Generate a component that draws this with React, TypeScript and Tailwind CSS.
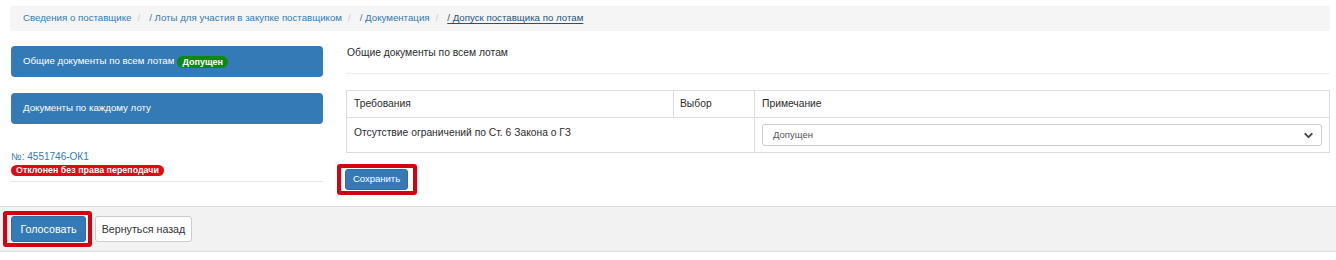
import React from 'react';
import { ChevronDown } from 'lucide-react';

const crumbs = [
  'Сведения о поставщике',
  '/ Лоты для участия в закупке поставщиком',
  '/ Документация',
];

export default function App() {
  return (
    <div className="w-[1336px] h-[260px] bg-white text-[10.3px] text-[#2b2b2b] font-['Liberation_Sans',Arial,sans-serif]">
      {/* Breadcrumb */}
      <div className="pt-[6px] px-[10px] mr-[-4px]">
        <div className="h-[25px] bg-[#f5f5f5] rounded-[3px] flex items-center pl-[13px] text-[9.7px]">
          {crumbs.map((c) => (
            <React.Fragment key={c}>
              <span className="text-[#337ab7]">{c}</span>
              <span className="text-[#ccc] pl-[6px] pr-[9px]">/</span>
            </React.Fragment>
          ))}
          <span className="text-[#23527c] underline underline-offset-2">/ Допуск поставщика по лотам</span>
        </div>
      </div>

      <div className="flex pl-[11px] pr-[6px] pt-[15px]">
        {/* Left column */}
        <div className="w-[312px] flex flex-col text-[9.7px]">
          <div className="h-[31px] bg-[#337ab7] rounded-[4px] flex items-center pl-[12px] text-white">
            Общие документы по всем лотам
            <span className="ml-[3px] bg-[#0b8a12] rounded-full px-[5px] h-[12px] leading-[12px] text-[9px] font-bold">Допущен</span>
          </div>
          <div className="h-[31px] mt-[16px] bg-[#337ab7] rounded-[4px] flex items-center pl-[12px] text-white">
            Документы по каждому лоту
          </div>
          <div className="mt-[27px] text-[#337ab7] text-[10px] leading-[12px]">№: 4551746-ОК1</div>
          <div className="mt-[2px] self-start bg-[#e30613] text-white rounded-full px-[5px] h-[11px] leading-[11px] text-[8.9px] font-bold">
            Отклонен без права переподачи
          </div>
          <div className="mt-[5px] border-t border-[#e5e5e5]" />
        </div>

        {/* Right column */}
        <div className="flex-1 ml-[23px]">
          <div className="pt-[1px] h-[27px] leading-[12px] pl-px">Общие документы по всем лотам</div>
          <div className="border-t border-[#eee]" />
          <table className="mt-[16px] w-full border-collapse border border-[#ddd]">
            <thead>
              <tr className="h-[27px] text-left">
                <th className="font-normal border border-[#ddd] pl-[7px] w-[327px]">Требования</th>
                <th className="font-normal border border-[#ddd] pl-[6px] w-[81px]">Выбор</th>
                <th className="font-normal border border-[#ddd] pl-[7px]">Примечание</th>
              </tr>
            </thead>
            <tbody>
              <tr className="h-[35px]">
                <td colSpan={2} className="border border-[#ddd] pl-[7px] align-top pt-[7px]">
                  Отсутствие ограничений по Ст. 6 Закона о ГЗ
                </td>
                <td className="border border-[#ddd] px-[7px]">
                  <div className="h-[22px] border border-[#ccc] rounded-[3px] flex items-center justify-between pl-[10px] pr-[6px] text-[9.5px] text-[#555]">
                    Допущен
                    <ChevronDown size={13} strokeWidth={3.5} className="text-[#444]" />
                  </div>
                </td>
              </tr>
            </tbody>
          </table>
          <div className="mt-[11px] -ml-[9px] inline-flex border-4 border-[#d7000f] rounded-[3px] pl-[4px] pr-[5px] py-px">
            <button className="h-[21px] w-[63px] bg-[#337ab7] text-white rounded-[3px] text-[9.5px] border border-[#2e6da4]">
              Сохранить
            </button>
          </div>
        </div>
      </div>

      {/* Footer */}
      <div className="mt-[11px] h-[46px] bg-[#f2f2f2] border-t border-b border-[#ddd] flex items-center pl-[3px]">
        <div className="inline-flex border-4 border-[#d7000f] rounded-[3px] pl-[4px] pr-[2px] py-px">
          <button className="h-[26px] w-[75px] bg-[#337ab7] text-white rounded-[3px] text-[10.7px] border border-[#2e6da4]">
            Голосовать
          </button>
        </div>
        <button className="ml-[3px] h-[26px] w-[97px] bg-white text-[#333] rounded-[3px] text-[10.7px] border border-[#ccc]">
          Вернуться назад
        </button>
      </div>
    </div>
  );
}
